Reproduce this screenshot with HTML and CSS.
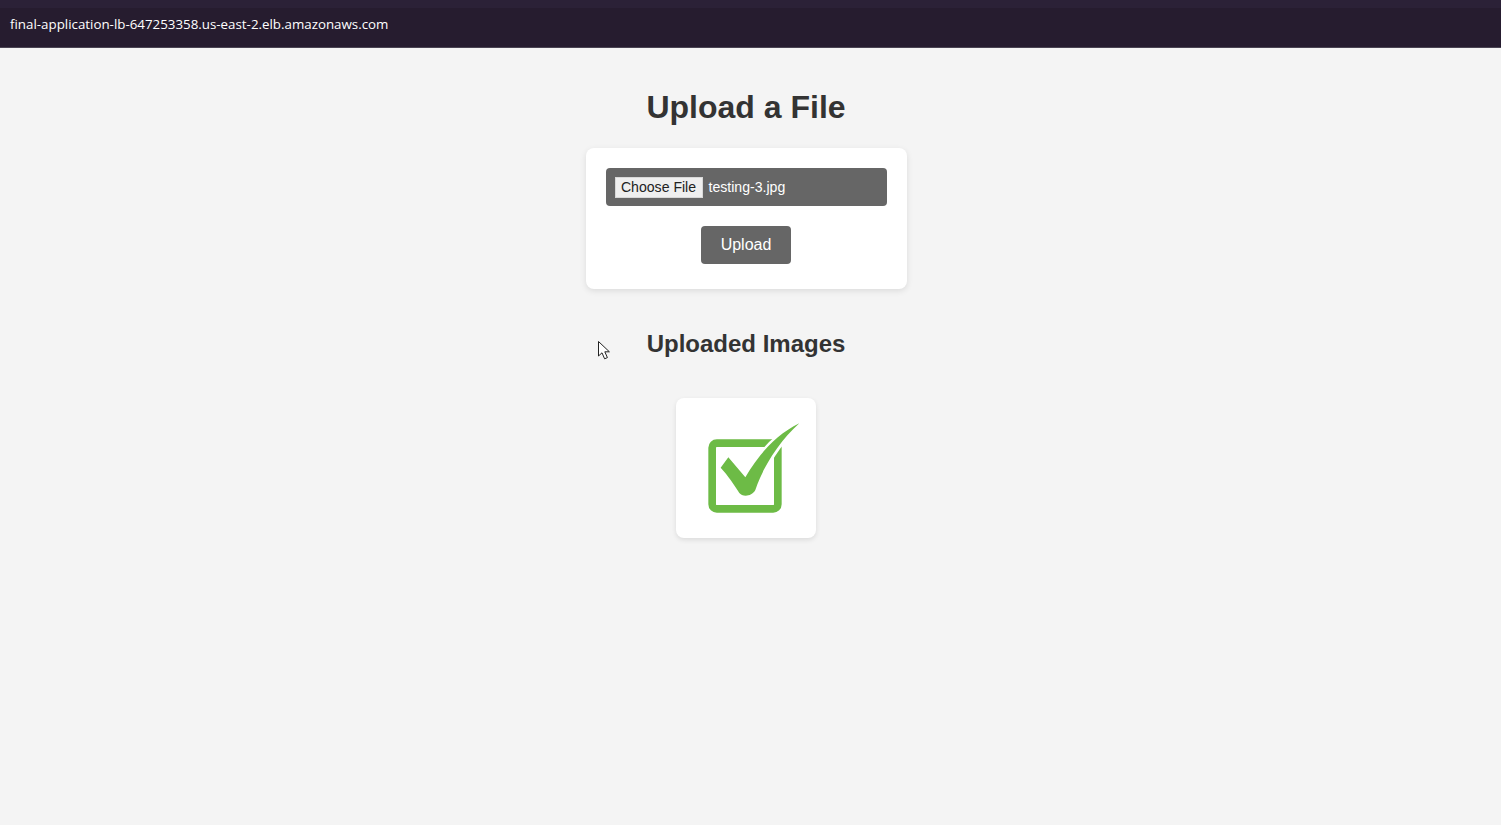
FILE: index.html
```html
<!DOCTYPE html>
<html lang="en">
<head>
<meta charset="utf-8">
<title>Upload a File</title>
<link rel="stylesheet" href="styles.css">
</head>
<body>
<header class="address-bar">
  <div class="address-strip"></div>
  <div class="address-text">final-application-lb-647253358.us-east-2.elb.amazonaws.com</div>
</header>
<main class="page">
  <h1 class="title">Upload a File</h1>
  <form class="upload-card">
    <div class="file-field">
      <button type="button" class="file-button">Choose File</button>
      <span class="file-name">testing-3.jpg</span>
    </div>
    <button type="button" class="upload-button">Upload</button>
  </form>
  <h2 class="subtitle">Uploaded Images</h2>
  <div class="gallery">
    <div class="image-card">
      <svg class="check-image" viewBox="30 24 420 420" width="140" height="140" aria-label="Green check mark">
        <rect class="check-box" x="138.5" y="159.5" width="197" height="197" rx="14"/>
        <path class="check-halo" d="M400 100C330 135 280 190 238 262L187 202L164 233C185 255 207 288 220 309C228 320 256 322 268 300C292 228 342 152 400 100Z"/>
        <path class="check-mark" d="M400 100C330 135 280 190 238 262L187 202L164 233C185 255 207 288 220 309C228 320 256 322 268 300C292 228 342 152 400 100Z"/>
      </svg>
    </div>
  </div>
</main>
<svg class="cursor" viewBox="0 0 14 21" width="14" height="21" aria-hidden="true">
  <path d="M1.5 1.5V16L5 12.8L7.6 18.8L10.4 17.6L7.8 11.8H12.4Z"/>
</svg>
</body>
</html>
```
FILE: styles.css
```css
* { box-sizing: border-box; }
html, body { height: 100%; }
body {
  margin: 0;
  background: #f4f4f4;
  font-family: "Liberation Sans", Arial, sans-serif;
  color: #333;
  overflow: hidden;
  position: relative;
}
.address-bar {
  height: 48px;
  background: #261c2f;
  border-bottom: 1px solid #4a4453;
  display: flex;
  flex-direction: column;
}
.address-strip { height: 8px; background: #2b2137; }
.address-text {
  font-family: "Open Sans", "Noto Sans", sans-serif;
  font-size: 13.33px;
  line-height: 16px;
  color: #fff;
  padding: 8px 0 0 10px;
}
.page {
  width: 1492px;
  display: flex;
  flex-direction: column;
  align-items: center;
}
.title {
  margin: 41px 0 0;
  font-size: 32px;
  line-height: 37px;
  font-weight: 700;
}
.upload-card {
  margin-top: 22px;
  width: 321px;
  height: 141px;
  padding: 20px;
  background: #fff;
  border-radius: 8px;
  box-shadow: 0 2px 6px rgba(0, 0, 0, 0.1);
  display: flex;
  flex-direction: column;
  align-items: center;
  gap: 20px;
}
.file-field {
  width: 281px;
  height: 38px;
  background: #666;
  border-radius: 4px;
  padding: 0 9px;
  display: flex;
  align-items: center;
  gap: 5px;
  font-size: 14.1px;
  color: #fff;
}
.file-button {
  height: 21px;
  width: 88px;
  padding: 0;
  border: 1px solid #d8d8d8;
  border-radius: 0;
  background: #efefef;
  color: #222;
  font: inherit;
}
.file-name { margin-left: 1px; }
.upload-button {
  width: 90px;
  height: 38px;
  padding: 0;
  border: 0;
  border-radius: 4px;
  background: #666;
  color: #fff;
  font-family: inherit;
  font-size: 16px;
}
.subtitle {
  margin: 41px 0 0;
  font-size: 24px;
  line-height: 28px;
  font-weight: 700;
}
.gallery {
  margin-top: 40px;
  display: flex;
  justify-content: center;
}
.image-card {
  width: 140px;
  height: 140px;
  background: #fff;
  border-radius: 8px;
  box-shadow: 0 2px 5px rgba(0, 0, 0, 0.1);
  overflow: hidden;
}
.check-image { display: block; filter: blur(0.4px); }
.check-box { fill: none; stroke: #6dbb46; stroke-width: 23; }
.check-halo { fill: #fff; stroke: #fff; stroke-width: 16; }
.check-mark { fill: #6dbb46; }
.cursor { position: absolute; left: 597px; top: 340px; }
.cursor path { fill: #fff; stroke: #222; stroke-width: 1; }
```
